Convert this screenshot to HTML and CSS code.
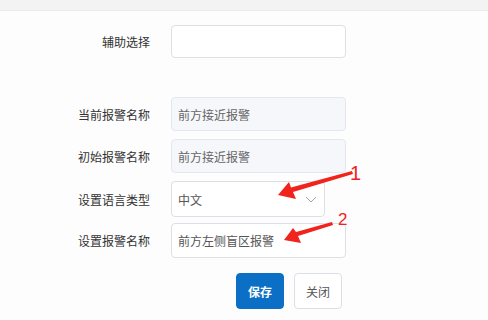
FILE: index.html
```html
<!DOCTYPE html>
<html lang="zh-CN">
<head>
<meta charset="UTF-8">
<title>设置报警名称</title>
<link rel="stylesheet" href="styles.css">
</head>
<body>
<div class="top-band"></div>
<div class="page">
  <div class="form">
    <div class="form-row">
      <label class="form-label">辅助选择</label>
      <div class="field"></div>
    </div>
    <div class="form-row spaced">
      <label class="form-label">当前报警名称</label>
      <div class="field readonly">前方接近报警</div>
    </div>
    <div class="form-row">
      <label class="form-label">初始报警名称</label>
      <div class="field readonly">前方接近报警</div>
    </div>
    <div class="form-row select-row">
      <label class="form-label">设置语言类型</label>
      <div class="field select">
        <span>中文</span>
        <svg class="chevron" width="12" height="7" viewBox="0 0 12 7">
          <path d="M1 1 L6 6 L11 1" fill="none" stroke="#a0a4ab" stroke-width="1"/>
        </svg>
      </div>
    </div>
    <div class="form-row last-row">
      <label class="form-label">设置报警名称</label>
      <div class="field">前方左侧盲区报警</div>
    </div>
    <div class="button-row">
      <button class="btn btn-primary">保存</button>
      <button class="btn">关闭</button>
    </div>
  </div>

  <!-- annotation arrows drawn over the form -->
  <svg class="marks" width="488" height="320" viewBox="0 0 488 320">
    <polygon points="278,195 289,182 291,187.5 352,171 353,174 293,192 296,199" fill="#f0231d"/>
    <text x="350" y="180" class="mark-num">1</text>
    <polygon points="284,240 293,228 296,232 332,222 333,225 298,236 301,243" fill="#f0231d"/>
    <text x="338" y="225" class="mark-num small">2</text>
  </svg>
</div>
</body>
</html>
```

FILE: styles.css
```css
/* styles.css */
body {
  margin: 0;
  background-color: #fdfdfd;
  color: #333;
  font-family: "Noto Sans CJK SC", "Noto Sans", sans-serif;
  font-size: 12px;
}

.top-band {
  height: 10px;
  background-color: #f3f3f3;
  border-bottom: 1px solid #ececec;
}

.page {
  position: relative;
  height: 309px;
}

.form {
  padding-top: 14px;
}

.form-row {
  display: flex;
  align-items: center;
  margin-bottom: 8px;
}

.form-row.spaced {
  margin-top: 39px;
}

.form-row.select-row {
  margin-bottom: 6px;
}

.form-label {
  width: 150px;
  margin-right: 21px;
  text-align: right;
  color: #333;
}

.field {
  width: 175px;
  height: 34px;
  box-sizing: border-box;
  border: 1px solid #dcdfe6;
  border-radius: 4px;
  background-color: #fff;
  padding-left: 6px;
  display: flex;
  align-items: center;
  color: #555;
}

.form-row:first-child .field {
  height: 33px;
}

.form-row.last-row .field {
  height: 35px;
}

.field.readonly {
  background-color: #f5f7fa;
  border-color: #e4e7ed;
  color: #666;
}

.field.select {
  width: 154px;
  height: 36px;
  justify-content: space-between;
  padding-right: 7px;
}

.chevron {
  display: block;
}

.button-row {
  display: flex;
  padding-left: 236px;
  margin-top: 15px;
}

.btn {
  width: 48px;
  height: 36px;
  margin-right: 10px;
  border: 1px solid #dcdfe6;
  border-radius: 4px;
  background-color: #fff;
  color: #555;
  font-family: "Noto Sans CJK SC", sans-serif;
  font-size: 12px;
  padding: 0;
}

.btn-primary {
  background-color: #0b70c5;
  border-color: #0b70c5;
  color: #fff;
  font-weight: bold;
}

.marks {
  position: absolute;
  top: -11px;
  left: 0;
  pointer-events: none;
}

.mark-num {
  font-family: "Liberation Sans", sans-serif;
  font-size: 20px;
  fill: #f0231d;
}

.mark-num.small {
  font-size: 17px;
}
```
